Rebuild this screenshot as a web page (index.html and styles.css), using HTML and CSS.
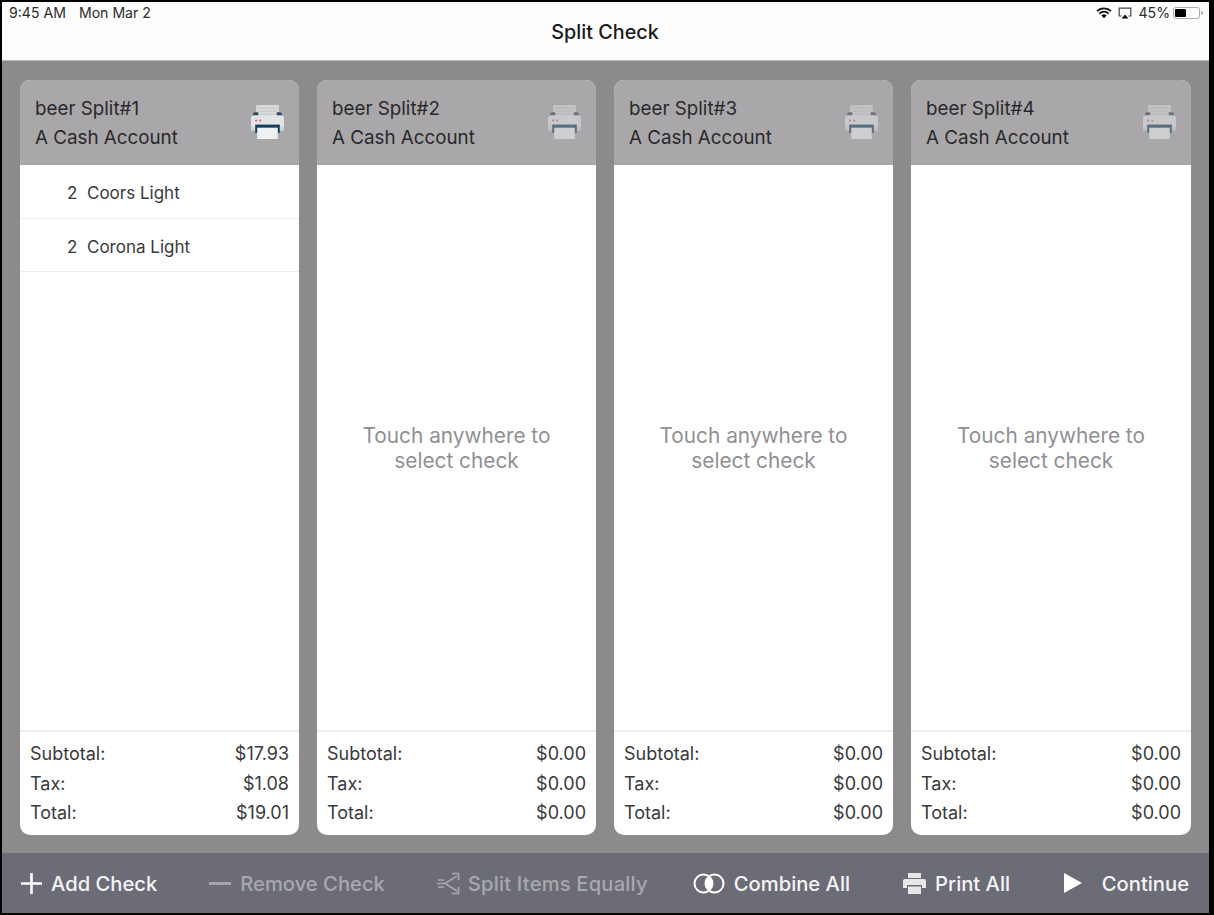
FILE: index.html
```html
<!DOCTYPE html>
<html lang="en">
<head>
<meta charset="utf-8">
<title>Split Check</title>
<link rel="stylesheet" href="styles.css">
</head>
<body>
<svg class="defs" width="0" height="0" aria-hidden="true">
  <symbol id="printer" viewBox="0 0 34 34">
    <rect x="6" y="1" width="22" height="12" rx="1" fill="#d9dbdb"/>
    <path d="M8 4h18M8 7h18M8 10h18" stroke="#c4c6c7" stroke-width="1"/>
    <path d="M3 10a2 2 0 0 1 2-2h3v4H3zM31 10a2 2 0 0 0-2-2h-3v4h5z" fill="#33475e"/>
    <path d="M1 14a3 3 0 0 1 3-3h26a3 3 0 0 1 3 3v9H1z" fill="#e3e5e6"/>
    <rect x="5" y="20" width="24" height="8" fill="#14405e"/>
    <rect x="1" y="22" width="4" height="4" fill="#d2d4d5"/>
    <rect x="29" y="22" width="4" height="4" fill="#d2d4d5"/>
    <circle cx="6" cy="16" r="1" fill="#d9505a"/>
    <circle cx="10" cy="16" r="1" fill="#d9505a"/>
    <rect x="7" y="23" width="20" height="11" fill="#eef0f1"/>
  </symbol>
</svg>
<div class="screen">
  <header class="topbar">
    <div class="status">
      <span class="clock">9:45 AM</span>
      <span class="date">Mon Mar 2</span>
      <span class="status-right">
        <svg class="wifi" width="16" height="12" viewBox="0 0 16 12"><path d="M1 4.200a10 10 0 0 1 14 0M3.300 6.600a6.800 6.800 0 0 1 9.400 0" fill="none" stroke="#111" stroke-width="1.700"/><path d="M5.400 8.500a3.600 3.600 0 0 1 5.200 0L8 11.200z" fill="#111"/></svg>
        <svg class="airplay" width="14" height="12" viewBox="0 0 14 12"><path d="M3.500 9H1.200V1.200h11.600V9h-2.300" fill="none" stroke="#444" stroke-width="1.200"/><path d="M3.500 11.500L7 7.500l3.500 4z" fill="#111"/></svg>
        <span class="battery-text">45%</span>
        <span class="battery"><span class="battery-fill"></span></span>
        <span class="battery-cap"></span>
      </span>
    </div>
    <h1 class="title">Split Check</h1>
  </header>

  <main class="checks">
    <section class="card">
      <div class="card-head">
        <div class="card-names"><div>beer Split#1</div><div>A Cash Account</div></div>
        <svg class="printer" width="35" height="35" viewBox="0 0 34 34"><use href="#printer"/></svg>
      </div>
      <div class="items">
        <div class="item"><span class="qty">2</span><span>Coors Light</span></div>
        <div class="item"><span class="qty">2</span><span>Corona Light</span></div>
      </div>
      <div class="totals">
        <div class="row"><span>Subtotal:</span><span>$17.93</span></div>
        <div class="row"><span>Tax:</span><span>$1.08</span></div>
        <div class="row"><span>Total:</span><span>$19.01</span></div>
      </div>
    </section>

    <section class="card">
      <div class="card-head">
        <div class="card-names"><div>beer Split#2</div><div>A Cash Account</div></div>
        <svg class="printer faded" width="35" height="35" viewBox="0 0 34 34"><use href="#printer"/></svg>
      </div>
      <div class="empty">Touch anywhere to<br>select check</div>
      <div class="totals">
        <div class="row"><span>Subtotal:</span><span>$0.00</span></div>
        <div class="row"><span>Tax:</span><span>$0.00</span></div>
        <div class="row"><span>Total:</span><span>$0.00</span></div>
      </div>
    </section>

    <section class="card">
      <div class="card-head">
        <div class="card-names"><div>beer Split#3</div><div>A Cash Account</div></div>
        <svg class="printer faded" width="35" height="35" viewBox="0 0 34 34"><use href="#printer"/></svg>
      </div>
      <div class="empty">Touch anywhere to<br>select check</div>
      <div class="totals">
        <div class="row"><span>Subtotal:</span><span>$0.00</span></div>
        <div class="row"><span>Tax:</span><span>$0.00</span></div>
        <div class="row"><span>Total:</span><span>$0.00</span></div>
      </div>
    </section>

    <section class="card">
      <div class="card-head">
        <div class="card-names"><div>beer Split#4</div><div>A Cash Account</div></div>
        <svg class="printer faded" width="35" height="35" viewBox="0 0 34 34"><use href="#printer"/></svg>
      </div>
      <div class="empty">Touch anywhere to<br>select check</div>
      <div class="totals">
        <div class="row"><span>Subtotal:</span><span>$0.00</span></div>
        <div class="row"><span>Tax:</span><span>$0.00</span></div>
        <div class="row"><span>Total:</span><span>$0.00</span></div>
      </div>
    </section>
  </main>

  <footer class="toolbar">
    <div class="tool add">
      <svg width="23" height="23" viewBox="0 0 23 23"><path d="M11.500 1v21M1 11.500h21" stroke="#fff" stroke-width="2.600"/></svg>
      <span>Add Check</span>
    </div>
    <div class="tool off">
      <svg width="22" height="23" viewBox="0 0 22 23"><path d="M0 11.500h22" stroke="#a8a8ae" stroke-width="2.800"/></svg>
      <span>Remove Check</span>
    </div>
    <div class="tool off split">
      <svg width="23" height="23" viewBox="0 0 23 23"><path d="M0 11.500h8L20 4M8 11.500L20 19M1 8h6M1 15h6" fill="none" stroke="#a8a8ae" stroke-width="1.500"/><path d="M15 1.500h6.500V8M21.500 15v6.500H15" fill="none" stroke="#a8a8ae" stroke-width="1.700"/></svg>
      <span class="split-label">Split Items Equally</span>
    </div>
    <div class="tool combine">
      <svg width="32" height="21" viewBox="0 0 32 21"><circle cx="10.500" cy="10.500" r="9" fill="none" stroke="#fff" stroke-width="2"/><circle cx="21.500" cy="10.500" r="9" fill="none" stroke="#fff" stroke-width="2"/><path d="M16 3.500a9 9 0 0 1 0 14a9 9 0 0 1 0-14z" fill="#fff"/></svg>
      <span>Combine All</span>
    </div>
    <div class="tool print">
      <svg width="23" height="23" viewBox="0 0 23 23"><path d="M5 1h13v5H5z" fill="#e8e8ea"/><path d="M0 9a2 2 0 0 1 2-2h19a2 2 0 0 1 2 2v7h-4v-3H4v3H0z" fill="#e8e8ea"/><path d="M5 14.500h13V22H5z" fill="#e8e8ea"/></svg>
      <span>Print All</span>
    </div>
    <div class="tool continue">
      <svg width="20" height="22" viewBox="0 0 20 22"><path d="M1 1l18 10L1 21z" fill="#fff"/></svg>
      <span>Continue</span>
    </div>
  </footer>
</div>
</body>
</html>
```
FILE: styles.css
```css
* { box-sizing: border-box; }
html, body { margin: 0; height: 915px; overflow: hidden; background: #000; }
body { padding: 2px 5px 2px 2px; font-family: Inter, "Noto Sans", sans-serif; color: #2a2a2c; }
.defs { display: block; height: 0; }
.screen { height: 911px; display: flex; flex-direction: column; background: #8c8a8d; }

.topbar { height: 59px; background: #fdfdfe; border-bottom: 1px solid #b9b9ba; flex: none; padding: 0 6px 0 7px; }
.status { display: flex; align-items: center; height: 21px; font-size: 14.100px; color: #2c2c2e; }
.date { margin-left: 13px; }
.status-right { margin-left: auto; display: flex; align-items: center; }
.wifi { margin-right: 6px; }
.airplay { margin-right: 6px; }
.battery { width: 27px; height: 12px; border: 1px solid #aaa; border-radius: 3px; padding: 1px; display: block; margin-left: 3px; }
.battery-fill { display: block; width: 11px; height: 8px; background: #000; border-radius: 1px; }
.battery-cap { width: 2px; height: 4px; background: #aaa; border-radius: 0 2px 2px 0; margin-left: 1px; }
.title { margin: -3px 0 0; text-align: center; font-size: 19.800px; font-weight: 500; color: #1a1a1c; letter-spacing: 0; transform: translateX(-1px); }

.checks { flex: 1; min-height: 0; display: flex; gap: 18px; padding: 19px 18px 18px; }
.card { flex: 0 0 279px; min-width: 0; display: flex; flex-direction: column; background: #fff; border-radius: 10px; overflow: hidden; }
.card:last-child { flex: 1 1 0; }
.card-head { height: 85px; flex: none; background: #a9a7aa; display: flex; align-items: center; justify-content: space-between; padding: 0 14px 0 15px; font-size: 18.800px; color: #29292b; }
.card-names { line-height: 29px; }
.printer { margin-bottom: 2px; }
.printer.faded { opacity: .55; }

.items { flex: 1; min-height: 0; }
.item { height: 53.500px; display: flex; align-items: center; padding: 4px 0 0 47px; border-bottom: 1.500px solid #ededee; font-size: 17px; color: #3a3a3c; }
.qty { width: 20px; }

.empty { flex: 1; min-height: 0; display: flex; align-items: center; justify-content: center; text-align: center; font-size: 20.800px; line-height: 25px; color: #909095; }

.totals { height: 105px; flex: none; border-top: 2px solid #ededee; padding: 7px 10px 0; font-size: 18px; color: #3a3a3c; }
.row { display: flex; justify-content: space-between; height: 29.500px; align-items: center; }

.toolbar { height: 60px; flex: none; background: #6c6c76; display: flex; align-items: center; gap: 52px; padding: 0 20px 0 18px; font-size: 20.200px; font-weight: 500; color: #f4f4f6; }
.tool { display: flex; align-items: center; gap: 9px; }
.tool.add { gap: 8px; }
.tool.off { color: #a8a8ae; }
.tool.split { gap: 8px; }
.tool.combine { margin-left: -7px; }
.tool.print { margin-left: 1px; }
.tool.continue { gap: 19px; margin-left: auto; }
.split-label { letter-spacing: .17px; }
```
